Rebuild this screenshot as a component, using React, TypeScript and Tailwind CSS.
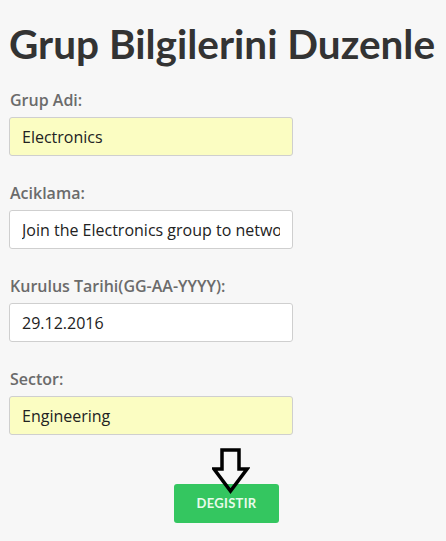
import { FC } from "react";

const fields = [
  { label: "Grup Adi:", value: "Electronics", filled: true },
  { label: "Aciklama:", value: "Join the Electronics group to network with others", filled: false },
  { label: "Kurulus Tarihi(GG-AA-YYYY):", value: "29.12.2016", filled: false },
  { label: "Sector:", value: "Engineering", filled: true },
];

const DownArrow: FC = () => (
  <svg width="38" height="46" viewBox="0 0 38 46" className="absolute left-[212px] top-[448px]">
    <path
      d="M10 2 H27 V21 H35 L18.5 43 L2 21 H10 Z"
      fill="none"
      stroke="#000"
      strokeWidth="3.5"
      strokeLinejoin="miter"
    />
  </svg>
);

const App: FC = () => {
  return (
    <main className="relative w-[446px] h-[541px] bg-[#f7f7f7] overflow-hidden font-['Open_Sans',sans-serif]">
      <h1 className="pl-[9px] pt-[18px] text-[40.5px] leading-[52px] font-bold text-[#333] font-['Lato',sans-serif] whitespace-nowrap">
        Grup Bilgilerini Duzenle
      </h1>
      <form className="flex flex-col gap-[26px] pl-[9px] pt-[19px]">
        {fields.map((f) => (
          <div key={f.label} className="flex flex-col gap-[6px]">
            <label className="pl-[1px] text-[16px] leading-[22px] font-semibold text-[#6b6b6b]">{f.label}</label>
            <input
              readOnly
              value={f.value}
              className={
                "w-[284px] h-[39px] rounded-[3px] border border-[#cfcfcf] px-[12px] text-[16px] text-[#222] outline-none " +
                (f.filled ? "bg-[#fbfdc2]" : "bg-white")
              }
            />
          </div>
        ))}
        <div className="flex pl-[165px] pt-[23px]">
          <button
            type="button"
            className="w-[105px] h-[39px] rounded-[3px] bg-[#34c660] text-[13px] font-bold tracking-[0.3px] text-[#e6fbea] font-['Lato',sans-serif]"
          >
            DEGISTIR
          </button>
        </div>
      </form>
      <DownArrow />
    </main>
  );
};

export default App;
